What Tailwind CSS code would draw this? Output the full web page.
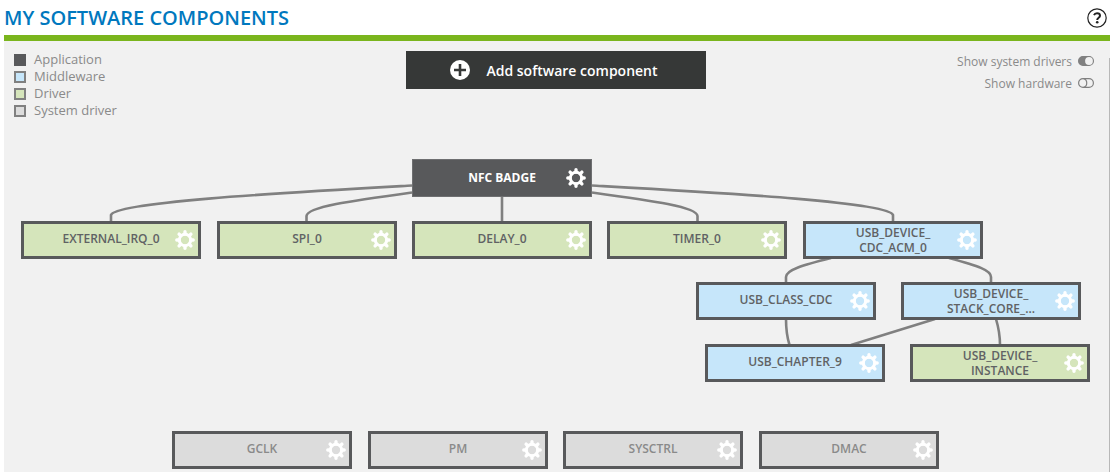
<!DOCTYPE html>
<html lang="en">
<head>
<meta charset="utf-8">
<meta name="viewport" content="width=device-width, initial-scale=1">
<title>My software components</title>
<script src="https://cdn.jsdelivr.net/npm/@tailwindcss/browser@4"></script>
</head>
<body class="flex min-h-screen flex-col bg-white pl-1 font-['Open_Sans','Noto_Sans',sans-serif]">
<svg class="hidden" aria-hidden="true">
  <symbol id="gear" viewBox="-10 -10 20 20">
    <circle r="5.7" fill="none" stroke="currentColor" stroke-width="3"/>
    <g stroke="currentColor" stroke-width="3.4" stroke-linecap="round">
      <path d="M0-8.2V-6M0 8.2V6M-8.2 0H-6M8.2 0H6M-5.9-5.9L-4.5-4.5M5.9-5.9L4.5-4.5M-5.9 5.9L-4.5 4.5M5.9 5.9L4.5 4.5"/>
    </g>
  </symbol>
</svg>

<header class="flex h-[41px] items-start justify-between border-b-6 border-[#7ab51d] pr-[3px]">
  <h1 class="pt-1 text-[20px] leading-7 font-semibold text-[#0078be]">MY SOFTWARE COMPONENTS</h1>
  <button type="button" aria-label="Help" class="mt-2 size-5 text-[#222]">
    <svg viewBox="0 0 20 20" class="size-5" fill="none" stroke="currentColor">
      <circle cx="10" cy="10" r="9.2" stroke-width="1.2"/>
      <path d="M7 7.2C7.6 5.8 8.7 5.3 10 5.3C11.9 5.3 13 6.3 13 7.7C13 9.8 10.2 9.7 10.2 12" stroke-width="2"/>
      <circle cx="10.2" cy="14.3" r="1.3" fill="currentColor" stroke="none"/>
    </svg>
  </button>
</header>

<main class="relative flex-1 bg-[#f1f1f1]">
  <div class="grid grid-cols-[1fr_300px_1fr] items-start pt-[10px] pr-3 pl-[10px]">
    <ul class="text-[13px] leading-[17px] text-[#8a8a8a]">
      <li class="flex items-center gap-2"><span class="size-3 bg-[#58595b]"></span>Application</li>
      <li class="flex items-center gap-2"><span class="size-3 border-2 border-[#808080] bg-[#c6e6fa]"></span>Middleware</li>
      <li class="flex items-center gap-2"><span class="size-3 border-2 border-[#808080] bg-[#d5e5bb]"></span>Driver</li>
      <li class="flex items-center gap-2"><span class="size-3 border-2 border-[#808080] bg-[#dcdcdc]"></span>System driver</li>
    </ul>
    <button type="button" class="flex h-[38px] items-center justify-center gap-4 bg-[#363837] pr-1 text-[14px] font-semibold text-white">
      <svg viewBox="0 0 20 20" class="size-5"><circle cx="10" cy="10" r="10" fill="#fff"/><path d="M10 4V16M4 10H16" stroke="#363837" stroke-width="2.6"/></svg>
      Add software component
    </button>
    <div class="flex flex-col items-end gap-1 pt-[2px] pr-1 text-[12px] leading-[18px] text-[#8a8a8a]">
      <label class="flex items-center gap-[6px]">Show system drivers
        <input type="checkbox" checked class="sr-only">
        <svg viewBox="0 0 16 12" class="h-3 w-4"><rect x=".6" y=".6" width="14.8" height="8.8" rx="4.4" fill="#808080" stroke="#808080" stroke-width="1.2"/><circle cx="11" cy="5" r="3.9" fill="#f1f1f1"/></svg>
      </label>
      <label class="flex items-center gap-[6px]">Show hardware
        <input type="checkbox" class="sr-only">
        <svg viewBox="0 0 16 12" class="h-3 w-4" fill="none" stroke="#808080" stroke-width="1.2"><rect x=".6" y=".6" width="14.8" height="8.8" rx="4.4"/><path d="M5.6 .6C9.8 1.6 9.8 8.4 5.6 9.4"/></svg>
      </label>
    </div>
  </div>

  <!-- Component graph: free canvas with edges below the nodes -->
  <svg class="pointer-events-none absolute top-0 left-0 h-[431px] w-[1106px]" viewBox="4 41 1106 431" fill="none" stroke="#808080" stroke-width="2.6" aria-hidden="true">
    <path d="M412 185.5C280 193 115 202 111 215V222"/>
    <path d="M412 192.5C350 201 307 207 306.5 216V222"/>
    <path d="M502 196V222"/>
    <path d="M592 192.5C654 201 697 207 697.5 216V222"/>
    <path d="M592 185.5C724 193 889 202 893 215V222"/>
    <path d="M831 258C803 265 786 270 786 277V283"/>
    <path d="M949 258C978 266 991 270 991 277V283"/>
    <path d="M786 319C786 331 787 337 789.5 345"/>
    <path d="M935 319L851 345"/>
    <path d="M996 319C999 329 1000 335 1000 345"/>
  </svg>

  <button type="button" class="absolute top-[118px] left-[408px] h-[38px] w-[180px] border border-[#6e6f71] bg-[#58595b] pb-[2px] text-[12px] leading-[15px] font-bold text-white">NFC BADGE
    <svg class="absolute top-2 right-[5px] size-5"><use href="#gear"/></svg></button>

  <button type="button" class="absolute top-[180px] left-[17px] h-[38px] w-[180px] border-3 border-[#58595b] bg-[#d5e5bb] pb-1 text-[12px] leading-[15px] font-semibold text-[#606264]">EXTERNAL_IRQ_0
    <svg class="absolute top-[6px] right-[3px] size-5 text-white"><use href="#gear"/></svg></button>
  <button type="button" class="absolute top-[180px] left-[213px] h-[38px] w-[180px] border-3 border-[#58595b] bg-[#d5e5bb] pb-1 text-[12px] leading-[15px] font-semibold text-[#606264]">SPI_0
    <svg class="absolute top-[6px] right-[3px] size-5 text-white"><use href="#gear"/></svg></button>
  <button type="button" class="absolute top-[180px] left-[408px] h-[38px] w-[180px] border-3 border-[#58595b] bg-[#d5e5bb] pb-1 text-[12px] leading-[15px] font-semibold text-[#606264]">DELAY_0
    <svg class="absolute top-[6px] right-[3px] size-5 text-white"><use href="#gear"/></svg></button>
  <button type="button" class="absolute top-[180px] left-[603px] h-[38px] w-[180px] border-3 border-[#58595b] bg-[#d5e5bb] pb-1 text-[12px] leading-[15px] font-semibold text-[#606264]">TIMER_0
    <svg class="absolute top-[6px] right-[3px] size-5 text-white"><use href="#gear"/></svg></button>
  <button type="button" class="absolute top-[180px] left-[799px] h-[38px] w-[180px] border-3 border-[#58595b] bg-[#c6e6fa] text-[12px] leading-[15px] font-semibold text-[#606264]">USB_DEVICE_<br>CDC_ACM_0
    <svg class="absolute top-[6px] right-[3px] size-5 text-white"><use href="#gear"/></svg></button>

  <button type="button" class="absolute top-[241px] left-[692px] h-[38px] w-[180px] border-3 border-[#58595b] bg-[#c6e6fa] pb-1 text-[12px] leading-[15px] font-semibold text-[#606264]">USB_CLASS_CDC
    <svg class="absolute top-[6px] right-[3px] size-5 text-white"><use href="#gear"/></svg></button>
  <button type="button" class="absolute top-[241px] left-[897px] h-[38px] w-[180px] border-3 border-[#58595b] bg-[#c6e6fa] text-[12px] leading-[15px] font-semibold text-[#606264]">USB_DEVICE_<br>STACK_CORE_...
    <svg class="absolute top-[6px] right-[3px] size-5 text-white"><use href="#gear"/></svg></button>

  <button type="button" class="absolute top-[303px] left-[701px] h-[38px] w-[180px] border-3 border-[#58595b] bg-[#c6e6fa] pb-1 text-[12px] leading-[15px] font-semibold text-[#606264]">USB_CHAPTER_9
    <svg class="absolute top-[6px] right-[3px] size-5 text-white"><use href="#gear"/></svg></button>
  <button type="button" class="absolute top-[303px] left-[906px] h-[38px] w-[180px] border-3 border-[#58595b] bg-[#d5e5bb] text-[12px] leading-[15px] font-semibold text-[#606264]">USB_DEVICE_<br>INSTANCE
    <svg class="absolute top-[6px] right-[3px] size-5 text-white"><use href="#gear"/></svg></button>

  <button type="button" class="absolute top-[390px] left-[168px] h-[38px] w-[180px] border-3 border-[#58595b] bg-[#dcdcdc] pb-1 text-[12px] leading-[15px] font-semibold text-[#8a8a8a]">GCLK
    <svg class="absolute top-[6px] right-[3px] size-5 text-white"><use href="#gear"/></svg></button>
  <button type="button" class="absolute top-[390px] left-[364px] h-[38px] w-[180px] border-3 border-[#58595b] bg-[#dcdcdc] pb-1 text-[12px] leading-[15px] font-semibold text-[#8a8a8a]">PM
    <svg class="absolute top-[6px] right-[3px] size-5 text-white"><use href="#gear"/></svg></button>
  <button type="button" class="absolute top-[390px] left-[559px] h-[38px] w-[180px] border-3 border-[#58595b] bg-[#dcdcdc] pb-1 text-[12px] leading-[15px] font-semibold text-[#8a8a8a]">SYSCTRL
    <svg class="absolute top-[6px] right-[3px] size-5 text-white"><use href="#gear"/></svg></button>
  <button type="button" class="absolute top-[390px] left-[755px] h-[38px] w-[180px] border-3 border-[#58595b] bg-[#dcdcdc] pb-1 text-[12px] leading-[15px] font-semibold text-[#8a8a8a]">DMAC
    <svg class="absolute top-[6px] right-[3px] size-5 text-white"><use href="#gear"/></svg></button>

  <div class="absolute top-[17px] right-0 bottom-0 w-px bg-[#b8b8b8]"></div>
</main>
</body>
</html>
